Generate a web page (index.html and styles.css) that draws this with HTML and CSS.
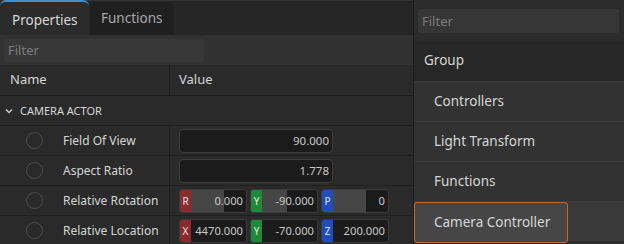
FILE: index.html
```html
<!DOCTYPE html>
<html lang="en">
<head>
    <meta charset="UTF-8">
    <meta name="viewport" content="width=device-width, initial-scale=1.0">
    <title>Properties</title>
    <link rel="stylesheet" href="styles.css">
</head>
<body>
    <div class="panel">
        <!-- Tabs -->
        <div class="tabs">
            <div class="tab active">Properties</div>
            <div class="tab">Functions</div>
        </div>

        <div class="filter-row">
            <div class="filter">Filter</div>
        </div>

        <div class="head">
            <div class="col-name">Name</div>
            <div class="col-value">Value</div>
        </div>

        <div class="section">
            <svg class="chevron" width="8" height="6" viewBox="0 0 8 6"><path d="M1 1.5 L4 4.5 L7 1.5" fill="none" stroke="#d0d0d0" stroke-width="1.4"/></svg>
            CAMERA ACTOR
        </div>

        <div class="row">
            <div class="cell-name"><span class="dot"></span>Field Of View</div>
            <div class="cell-value"><div class="num">90.000</div></div>
        </div>
        <div class="row">
            <div class="cell-name"><span class="dot"></span>Aspect Ratio</div>
            <div class="cell-value"><div class="num">1.778</div></div>
        </div>
        <div class="row">
            <div class="cell-name"><span class="dot"></span>Relative Rotation</div>
            <div class="cell-value vec">
                <div class="field slider"><span class="axis red">R</span><span class="fill" style="width: 50%"></span><span class="val">0.000</span></div>
                <div class="field slider"><span class="axis green">Y</span><span class="fill" style="width: 38%"></span><span class="val">-90.000</span></div>
                <div class="field slider"><span class="axis blue">P</span><span class="fill" style="width: 50%"></span><span class="val">0</span></div>
            </div>
        </div>
        <div class="row">
            <div class="cell-name"><span class="dot"></span>Relative Location</div>
            <div class="cell-value vec">
                <div class="field"><span class="axis red">X</span><span class="val">4470.000</span></div>
                <div class="field"><span class="axis green">Y</span><span class="val">-70.000</span></div>
                <div class="field"><span class="axis blue">Z</span><span class="val">200.000</span></div>
            </div>
        </div>
    </div>

    <!-- Menu -->
    <div class="menu">
        <div class="menu-filter-wrap">
            <div class="filter wide">Filter</div>
        </div>
        <div class="menu-item group">Group</div>
        <div class="menu-item">Controllers</div>
        <div class="menu-item">Light Transform</div>
        <div class="menu-item">Functions</div>
        <div class="menu-item last"><span class="selected">Camera Controller</span></div>
    </div>
</body>
</html>
```

FILE: styles.css
```css
body {
    margin: 0;
    width: 624px;
    height: 244px;
    overflow: hidden;
    background-color: #2a2a2a;
    font-family: "Noto Sans", "Open Sans", sans-serif;
    color: #d6d6d6;
    position: relative;
}

.panel {
    width: 413px;
}

.tabs {
    display: flex;
    height: 35px;
    background: #262626;
    border-top: 1px solid #323232;
    box-sizing: border-box;
}

.tab {
    font-size: 13.5px;
    line-height: 33px;
    padding: 0 11px;
    width: 84px;
    box-sizing: border-box;
    background: #1f1f1f;
    color: #a8a8a8;
    margin-top: 1px;
    margin-left: 1px;
    border-radius: 4px 4px 0 0;
}

.tab.active {
    width: 89px;
    padding-left: 12px;
    margin: -1px 0 0 0;
    line-height: 36px;
    background: #2b2b2b;
    color: #d8d8d8;
    border-top: 2px solid #3c8fd0;
    border-radius: 6px 6px 0 0;
}

.filter-row {
    height: 30px;
    background: #313131;
    padding: 4px;
    box-sizing: border-box;
}

.filter {
    width: 200px;
    height: 23px;
    background: #383838;
    border-radius: 3px;
    font-size: 13px;
    line-height: 23px;
    padding-left: 4px;
    box-sizing: border-box;
    color: #7c7c7c;
}

.head {
    display: flex;
    height: 31px;
    border-bottom: 1px solid #1c1c1c;
    box-sizing: border-box;
    font-size: 13px;
    line-height: 29px;
}

.col-name {
    width: 170px;
    padding-left: 10px;
    box-sizing: border-box;
    border-right: 1px solid #1e1e1e;
}

.col-value {
    padding-left: 9px;
}

.section {
    height: 30px;
    display: flex;
    align-items: center;
    padding-left: 5px;
    font-size: 11px;
    border-bottom: 1px solid #1f1f1f;
    box-sizing: border-box;
}

.chevron {
    margin-right: 7px;
}

.row {
    display: flex;
    height: 30px;
    border-bottom: 1px solid #1f1f1f;
    box-sizing: border-box;
}

.cell-name {
    width: 170px;
    display: flex;
    align-items: center;
    font-size: 12px;
    border-right: 1px solid #1f1f1f;
    box-sizing: border-box;
}

.dot {
    width: 17px;
    height: 17px;
    border: 1.5px solid #4e4e4e;
    border-radius: 50%;
    margin: 0 20px 0 26px;
    box-sizing: border-box;
}

.cell-value {
    display: flex;
    align-items: center;
    padding-left: 9px;
}

.num {
    width: 154px;
    height: 24px;
    background: #1b1b1b;
    border: 1px solid #3d3d3d;
    border-radius: 4px;
    box-sizing: border-box;
    text-align: right;
    padding-right: 3px;
    font-size: 11.5px;
    line-height: 22px;
    color: #c8c8c8;
}

.vec {
    gap: 3px;
}

.field {
    position: relative;
    display: flex;
    width: 68px;
    height: 24px;
    background: #1b1b1b;
    border: 1px solid #3a3a3a;
    border-radius: 3px;
    box-sizing: border-box;
    overflow: hidden;
    font-size: 11.2px;
    line-height: 22px;
}

.axis {
    width: 11px;
    flex-shrink: 0;
    font-size: 10px;
    text-align: center;
    color: #e6e6e6;
}

.red { background: #8a2a2c; }
.green { background: #1d8a3a; }
.blue { background: #1f4dbb; }

.fill {
    height: 100%;
    background: #464646;
}

.val {
    position: absolute;
    right: 3px;
    top: 0;
    color: #c8c8c8;
}

.menu {
    position: absolute;
    top: 0;
    right: 0;
    width: 211px;
    height: 244px;
    background: #2c2c2c;
    border-left: 1px solid #1d1d1d;
    box-sizing: border-box;
}

.menu-filter-wrap {
    padding: 9px 5px 8px 4px;
}

.filter.wide {
    width: 100%;
    height: 24px;
    background: #363636;
    line-height: 24px;
}

.menu-item {
    height: 40px;
    line-height: 39px;
    font-size: 13.5px;
    padding-left: 20px;
    background: #323232;
    border-top: 1px solid #3b3b3b;
    box-sizing: border-box;
    color: #d6d6d6;
}

.menu-item.group {
    background: #272727;
    padding-left: 10px;
    border-top: none;
}

.menu-item.last {
    background: #393939;
    padding-left: 0;
    border-top: 1px solid #3b3b3b;
}

.selected {
    display: block;
    width: 154px;
    height: 41px;
    padding-left: 19px;
    background: #464646;
    border: 1px solid #d8602c;
    border-radius: 3px;
    box-sizing: border-box;
    line-height: 39px;
}
```
